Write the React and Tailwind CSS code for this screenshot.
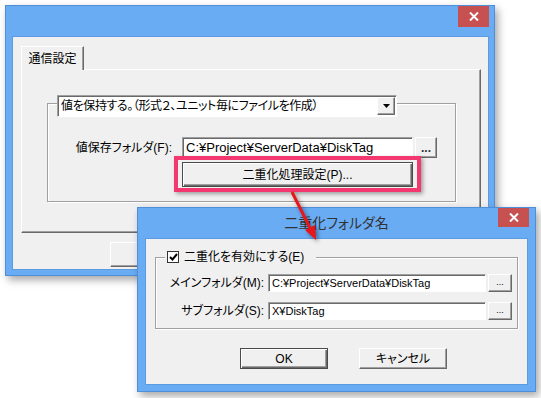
import React from 'react';

const font = "font-['Liberation_Sans','Noto_Sans_CJK_JP',sans-serif] [font-feature-settings:'palt']";
const raised = "bg-[#f0f0f0] border border-t-white border-l-white border-r-[#696969] border-b-[#696969] shadow-[inset_-1px_-1px_0_#a0a0a0]";
const defBtn = "bg-[#f0f0f0] border border-[#4a4a4a] shadow-[inset_1px_1px_0_#fff,inset_-1px_-1px_0_#696969,inset_-2px_-2px_0_#a0a0a0]";
const sunken = "bg-white border border-t-[#a0a0a0] border-l-[#a0a0a0] border-r-white border-b-white shadow-[inset_1px_1px_0_#696969]";

const CloseButton = ({ className }) => (
    <div className={`flex items-center justify-center bg-[#c75050] ${className}`}>
        <svg width="10" height="9" viewBox="0 0 10 9">
            <path d="M1 0.5 L9 8.5 M9 0.5 L1 8.5" stroke="#fff" strokeWidth="2" />
        </svg>
    </div>
);

function MainWindow() {
    return (
        <div className="absolute left-[5px] top-[5px] w-[490px] h-[271px] flex flex-col bg-[#6aacf4] border border-[#4f8ed8] shadow-[3px_4px_8px_rgba(0,0,0,0.35)]">
            <div className="h-[30px] shrink-0 flex justify-end pr-[5px]">
                <CloseButton className="w-[31px] h-[21px]" />
            </div>
            <div className="ml-[6px] mr-[5px] h-[234px] bg-[#f0f0f0] border border-[#5d9be0] pl-[8px] pt-[9px]">
                {/* --- Tab --- */}
                <div className="relative z-10 -mb-px w-[63px] h-[24px] flex items-center justify-center bg-[#f0f0f0] border-t border-l border-white border-r border-r-[#696969] shadow-[inset_-1px_0_0_#a0a0a0] text-[12px] text-black">
                    通信設定
                </div>
                <div className="w-[460px] h-[164px] border border-t-white border-l-white border-r-[#696969] border-b-[#696969] shadow-[inset_-1px_-1px_0_#a0a0a0] pl-[25px] pt-[33px]">
                    {/* --- Group --- */}
                    <div className="w-[409px] h-[99px] flex flex-col border border-[#a0a0a0] shadow-[1px_1px_0_#fff,inset_1px_1px_0_#fff]">
                        <div className="-mt-[9px] ml-[9px] w-[340px] h-[22px] flex items-center bg-white border border-t-[#a0a0a0] border-l-[#a0a0a0] border-r-white border-b-white shadow-[inset_1px_1px_0_#696969] pl-[3px] pr-[1px]">
                            <span className="flex-1 text-[12px] tracking-[-0.4px] text-black leading-none">値を保持する。（形式２、ユニット毎にファイルを作成）</span>
                            <div className={`w-[18px] h-[18px] flex items-center justify-center ${raised}`}>
                                <svg width="7" height="4" viewBox="0 0 7 4"><path d="M0 0 H7 L3.5 4 Z" fill="#000" /></svg>
                            </div>
                        </div>
                        <div className="mt-[20px] flex items-center">
                            <span className="w-[124px] text-right text-[12px] text-black">値保存フォルダ(F):</span>
                            <div className={`ml-[10px] w-[231px] h-[21px] flex items-center pl-[3px] text-[13px] text-black ${sunken}`}>
                                C:¥Project¥ServerData¥DiskTag
                            </div>
                            <div className={`ml-[2px] w-[22px] h-[21px] flex items-center justify-center text-[12px] font-bold text-[#333] ${raised}`}>
                                ...
                            </div>
                        </div>
                        <div className={`relative mt-[4px] ml-[134px] w-[231px] h-[25px] flex items-center justify-center text-[12px] text-black ${defBtn}`}>
                            二重化処理設定(P)...
                            <div className="absolute -left-[9px] -right-[9px] -top-[7px] -bottom-[6px] border-4 border-[#f2386f] shadow-[2px_2px_4px_rgba(0,0,0,0.35)]" />
                        </div>
                    </div>
                </div>
                <div className={`mt-[9px] ml-[89px] w-[80px] h-[25px] ${raised}`} />
            </div>
        </div>
    );
}

function FolderDialog() {
    return (
        <div className="absolute left-[137px] top-[207px] w-[399px] h-[185px] flex flex-col bg-[#6aacf4] border border-[#4f8ed8] shadow-[3px_4px_8px_rgba(0,0,0,0.35)]">
            <div className="relative h-[30px] shrink-0 flex items-center justify-center text-[14px] text-[#333]">
                二重化フォルダ名
                <CloseButton className="absolute right-[6px] top-0 w-[31px] h-[19px]" />
            </div>
            <div className="mx-[7px] h-[147px] bg-[#f0f0f0] border border-[#5d9be0] pl-[9px] pt-[18px]">
                <div className="w-[363px] h-[72px] flex flex-col border border-[#a0a0a0] shadow-[1px_1px_0_#fff,inset_1px_1px_0_#fff]">
                    <div className="-mt-[8px] ml-[9px] self-start h-[14px] flex items-center gap-[5px] bg-[#f0f0f0] pl-[2px] pr-[12px]">
                        <div className="w-[12px] h-[12px] flex items-center justify-center bg-white border border-[#333]">
                            <svg width="9" height="8" viewBox="0 0 9 8"><path d="M1 4 L3.5 6.5 L8 1" stroke="#000" strokeWidth="2" fill="none" /></svg>
                        </div>
                        <span className="text-[12px] text-black">二重化を有効にする(E)</span>
                    </div>
                    <div className="mt-[10px] flex items-center h-[18px]">
                        <span className="w-[108px] text-right text-[12px] text-black">メインフォルダ(M):</span>
                        <div className={`ml-[4px] w-[218px] h-[18px] flex items-center pl-[3px] text-[11px] text-black ${sunken}`}>C:¥Project¥ServerData¥DiskTag</div>
                        <div className={`ml-[2px] w-[24px] h-[18px] flex items-center justify-center text-[9px] text-black ${raised}`}>...</div>
                    </div>
                    <div className="mt-[10px] flex items-center h-[18px]">
                        <span className="w-[108px] text-right text-[12px] text-black">サブフォルダ(S):</span>
                        <div className={`ml-[4px] w-[218px] h-[18px] flex items-center pl-[3px] text-[11px] text-black ${sunken}`}>X¥DiskTag</div>
                        <div className={`ml-[2px] w-[24px] h-[18px] flex items-center justify-center text-[9px] text-black ${raised}`}>...</div>
                    </div>
                </div>
                <div className="mt-[19px] ml-[85px] flex">
                    <div className={`w-[88px] h-[21px] flex items-center justify-center text-[12px] text-black ${defBtn}`}>OK</div>
                    <div className={`ml-[31px] w-[88px] h-[21px] flex items-center justify-center text-[12px] text-black ${raised}`}>キャンセル</div>
                </div>
            </div>
        </div>
    );
}

export default function App() {
    return (
        <div className={`relative w-[541px] h-[398px] bg-white overflow-hidden ${font}`}>
            <MainWindow />
            <FolderDialog />
            <svg className="absolute left-0 top-0 drop-shadow-[2px_2px_2px_rgba(0,0,0,0.45)]" width="541" height="398" viewBox="0 0 541 398">
                <line x1="292" y1="192" x2="310" y2="228" stroke="#e8161b" strokeWidth="3" />
                <polygon points="316,240 305,230 315,225" fill="#e8161b" />
            </svg>
        </div>
    );
}
